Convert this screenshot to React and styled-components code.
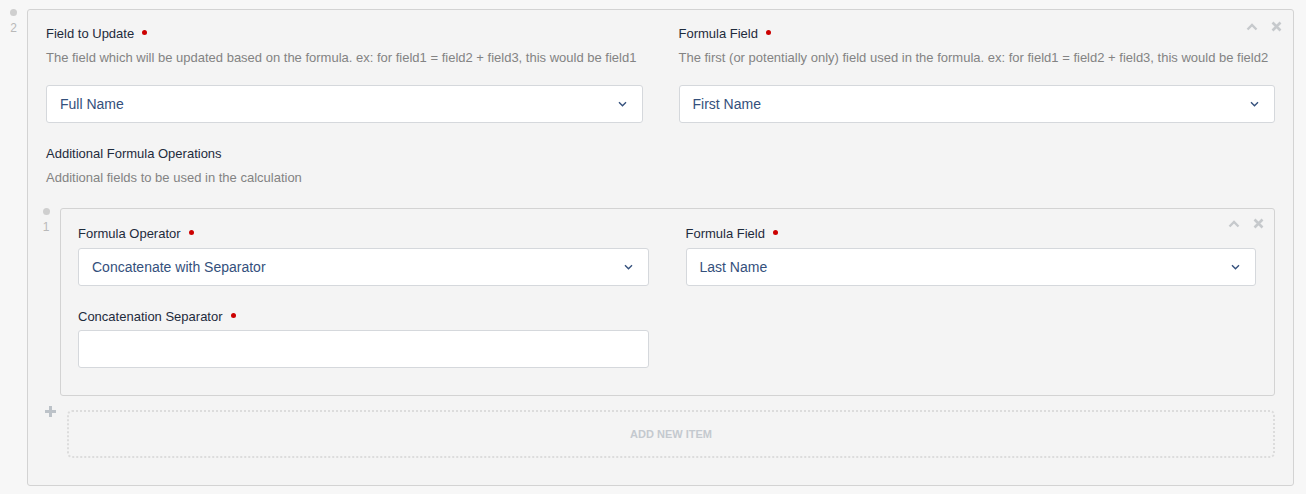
import React from 'react'
import styled, { createGlobalStyle } from 'styled-components'

const Global = createGlobalStyle`
  html, body { margin: 0; padding: 0; background: #f7f7f7; }
  body { font-family: "Liberation Sans", Arial, sans-serif; }
`

const Chevron = () => (
  <svg width="9" height="6" viewBox="0 0 9 6">
    <path d="M1 1.2l3.5 3.5 3.5-3.5" fill="none" stroke="#34507c" strokeWidth="1.4" />
  </svg>
)

const Controls = ({ top, right }) => (
  <Tools $top={top} $right={right}>
    <svg width="12" height="8" viewBox="0 0 12 8">
      <path d="M1.5 6.5L6 2l4.5 4.5" fill="none" stroke="#c6c9cc" strokeWidth="2.4" />
    </svg>
    <svg width="11" height="11" viewBox="0 0 11 11">
      <path d="M1.5 1.5l8 8M9.5 1.5l-8 8" fill="none" stroke="#c6c9cc" strokeWidth="2.6" />
    </svg>
  </Tools>
)

const Select = ({ value }) => (
  <Box>
    <span>{value}</span>
    <Chevron />
  </Box>
)

const Field = ({ label, desc, value, input, gap }) => (
  <div>
    <Label>
      {label}
      <Req />
    </Label>
    {desc && <Desc>{desc}</Desc>}
    <Spacer $h={gap} />
    {input ? <Box /> : <Select value={value} />}
  </div>
)

const App = () => {
  return (
    <>
      <Global />
      <Page>
        <Row>
          <Gutter $w={27}>
            <Dot />
            <Num $top={5}>2</Num>
          </Gutter>
          <Card>
            <Controls top={11} right={11} />
            <Grid $gap={36}>
              <Field
                label="Field to Update"
                desc="The field which will be updated based on the formula. ex: for field1 = field2 + field3, this would be field1"
                value="Full Name"
                gap={19}
              />
              <Field
                label="Formula Field"
                desc="The first (or potentially only) field used in the formula. ex: for field1 = field2 + field3, this would be field2"
                value="First Name"
                gap={19}
              />
            </Grid>
            <Section>
              <Label>Additional Formula Operations</Label>
              <Desc>Additional fields to be used in the calculation</Desc>
            </Section>
            <Nested>
              <Gutter $w={28}>
                <Dot />
                <Num $top={5}>1</Num>
              </Gutter>
              <InnerCard>
                <Controls top={9} right={10} />
                <Grid $gap={37}>
                  <Field label="Formula Operator" value="Concatenate with Separator" gap={6} />
                  <Field label="Formula Field" value="Last Name" gap={6} />
                </Grid>
                <SecondRow $gap={37}>
                  <Field label="Concatenation Separator" input gap={5} />
                  <div />
                </SecondRow>
              </InnerCard>
            </Nested>
            <AddRow>
              <Plus>
                <svg width="13" height="13" viewBox="0 0 13 13">
                  <path d="M6.5 1v11M1 6.5h11" stroke="#bcc2c8" strokeWidth="3" />
                </svg>
              </Plus>
              <AddBox>ADD NEW ITEM</AddBox>
            </AddRow>
          </Card>
        </Row>
      </Page>
    </>
  )
}

const Page = styled.div`
  width: 1306px;
  height: 494px;
  box-sizing: border-box;
  padding: 9px 12px 0 0;
`

const Row = styled.div`
  display: flex;
  align-items: flex-start;
`

const Gutter = styled.div`
  width: ${p => p.$w}px;
  flex-shrink: 0;
  display: flex;
  flex-direction: column;
  align-items: center;
`

const Dot = styled.div`
  width: 7px;
  height: 7px;
  border-radius: 50%;
  background: #cfcfcf;
`

const Num = styled.div`
  font-size: 12px;
  line-height: 14px;
  color: #b9b9b9;
  margin-top: ${p => p.$top}px;
`

const Card = styled.div`
  position: relative;
  flex: 1;
  background: #f4f4f4;
  border: 1px solid #d3d3d3;
  border-radius: 3px;
  padding: 16px 18px 27px 18px;
`

const Tools = styled.div`
  position: absolute;
  top: ${p => p.$top}px;
  right: ${p => p.$right}px;
  display: flex;
  align-items: center;
  gap: 13px;
`

const Grid = styled.div`
  display: grid;
  grid-template-columns: 1fr 1fr;
  column-gap: ${p => p.$gap}px;
`

const SecondRow = styled(Grid)`
  margin-top: 23px;
`

const Label = styled.div`
  font-size: 13px;
  line-height: 16px;
  color: #1e2b3c;
  display: flex;
  align-items: center;
`

const Req = styled.span`
  width: 5px;
  height: 5px;
  border-radius: 50%;
  background: #cc0000;
  margin-left: 8px;
  margin-top: -4px;
`

const Desc = styled.div`
  font-size: 13px;
  line-height: 16px;
  color: #838383;
  margin-top: 8px;
  white-space: nowrap;
`

const Spacer = styled.div`
  height: ${p => p.$h}px;
`

const Box = styled.div`
  height: 38px;
  box-sizing: border-box;
  background: #fff;
  border: 1px solid #d5d8dc;
  border-radius: 3px;
  padding: 0 15px 0 13px;
  display: flex;
  align-items: center;
  justify-content: space-between;
  font-size: 14px;
  color: #34507c;
`

const Section = styled.div`
  margin-top: 23px;
`

const Nested = styled.div`
  display: flex;
  align-items: flex-start;
  margin: 22px 0 0 -14px;
`

const InnerCard = styled.div`
  position: relative;
  flex: 1;
  border: 1px solid #d3d3d3;
  border-radius: 3px;
  padding: 17px 18px 27px 17px;
`

const AddRow = styled.div`
  display: flex;
  align-items: flex-start;
  margin: 14px 0 0 -8px;
`

const Plus = styled.div`
  width: 24px;
  margin-right: 5px;
  display: flex;
  justify-content: center;
  margin-top: -5px;
`

const AddBox = styled.div`
  flex: 1;
  height: 48px;
  box-sizing: border-box;
  border: 2px dotted #dcdcdc;
  border-radius: 5px;
  display: flex;
  align-items: center;
  justify-content: center;
  font-size: 11px;
  font-weight: bold;
  color: #c4c9cf;
`

export default App
